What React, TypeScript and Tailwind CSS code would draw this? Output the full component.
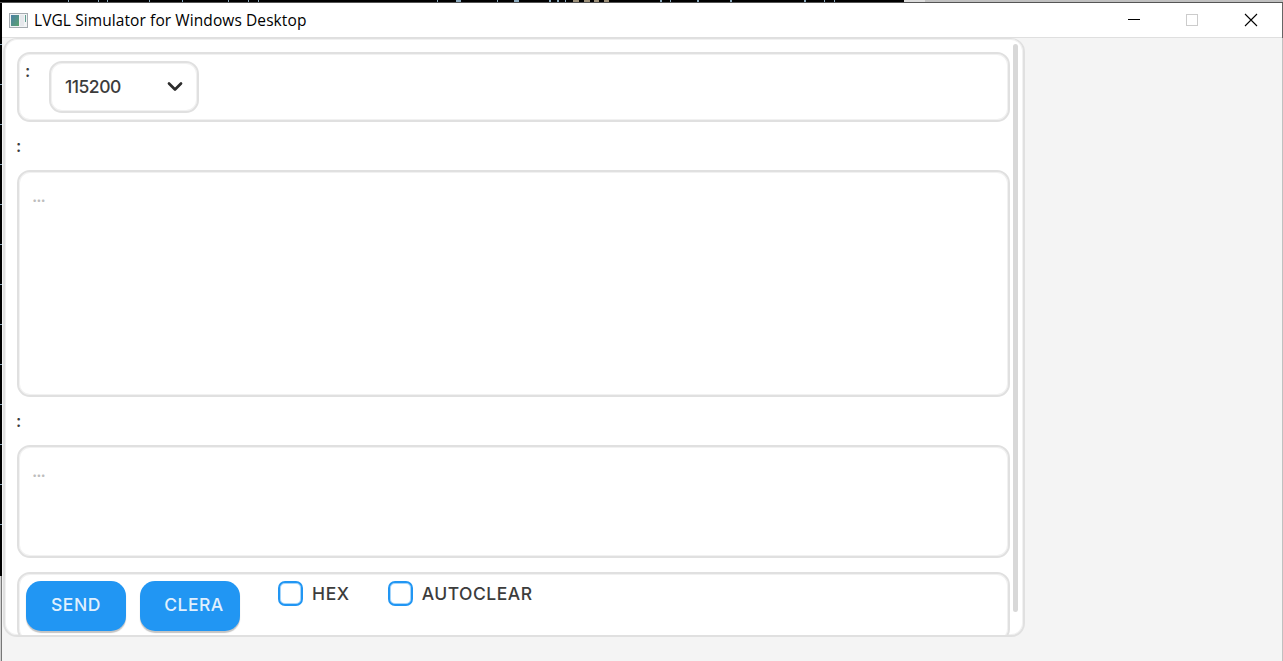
import type { ReactNode } from "react";

type PanelProps = {
  className?: string;
  children?: ReactNode;
};

type ActionButtonProps = {
  label: string;
  className?: string;
};

// rows of the terminal window that show past the left edge
const STREAKS = [44, 84, 124, 164, 204, 244, 284, 324, 364, 404, 444, 484, 524];

const Panel = ({ className = "", children }: PanelProps) => (
  <div
    className={`rounded-[13px] border-2 border-[#e0e0e0] bg-white shadow-[inset_0_0_0_1px_#f1f1f1] ${className}`}
  >
    {children}
  </div>
);

const ActionButton = ({ label, className = "" }: ActionButtonProps) => (
  <button
    type="button"
    className={`h-[50px] w-[100px] rounded-[15px] bg-[#2196f3] pb-[3px] text-[17.5px] leading-[46px] text-[#e0f0fd] shadow-[0_2px_1px_#c4c4c4] ${className}`}
  >
    {label}
  </button>
);

const Checkbox = ({ label, className }: { label: string; className: string }) => (
  <label className="flex h-[25px] items-center gap-[9px]">
    <span className="h-[25px] w-[25px] rounded-[7px] border-2 border-[#2196f3] bg-white shadow-[inset_0_0_0_1px_#a6d5fa]" />
    <span className={`text-[17.5px] leading-[25px] ${className}`}>{label}</span>
  </label>
);

const AppIcon = () => (
  <svg width="19" height="15" viewBox="0 0 19 15">
    <defs>
      <linearGradient id="pane" x1="0" y1="0" x2="1" y2="1">
        <stop offset="0" stopColor="#4a7fa5" />
        <stop offset="1" stopColor="#5ba36f" />
      </linearGradient>
    </defs>
    <rect x=".5" y=".5" width="18" height="14" fill="#f2f4f5" stroke="#a5abb0" />
    <rect x="2" y="2" width="8" height="11" fill="url(#pane)" />
    <rect x="11" y="2" width="4" height="11" fill="#e6e8ec" />
    <rect x="16" y="2" width="1" height="7" fill="#5f9f90" />
  </svg>
);

const TerminalEdge = () => (
  <svg className="shrink-0" width="904" height="2" viewBox="0 0 904 2">
    <rect width="904" height="2" fill="#000" />
    <path
      d="M68 1h1M98 1h1M107 1h1M149 1h1M182 1h1M228 1h1M248 1h1M258 1h1M437 1h1M456 1h5M497 1h1M514 1h5M549 1h2M557 1h2M565 1h1M661 0v2M670 1h1M697 1h2M730 1h2M804 1h2M824 1h1M834 1h1"
      stroke="#8ba9bd"
      strokeWidth="2"
    />
    <path d="M573 1h6M584 1h6M594 1h5M604 1h5" stroke="#9b8f78" strokeWidth="2" />
  </svg>
);

const TitleBar = () => (
  <div className="flex h-[34px] items-center bg-white">
    <div className="ml-[7px] flex flex-1 items-center gap-[6px]">
      <AppIcon />
      <span className="font-['Open_Sans',sans-serif] text-[15.5px] font-normal leading-5 tracking-[0.09px] text-black">
        LVGL Simulator for Windows Desktop
      </span>
    </div>
    <svg width="154" height="34" viewBox="0 0 154 34" fill="none">
      <path d="M0 16.5h12" stroke="#000" />
      <rect x="58.5" y="11.5" width="11" height="11" stroke="#ccc" />
      <path d="M117 11l12 12M129 11l-12 12" stroke="#000" strokeWidth="1.1" />
    </svg>
  </div>
);

const App = () => {
  return (
    <div className="flex h-[661px] w-[1283px] flex-col overflow-hidden bg-[#f3f3f3] font-['Inter',sans-serif] font-[450] text-[#3c3c3c]">
      <div className="flex h-[3px] shrink-0 border-b border-[#555]">
        <TerminalEdge />
        <div className="h-[2px] w-[21px] bg-[#dcdcdc]" />
        <div className="h-[2px] flex-1 bg-[#c0c0c0]" />
      </div>
      <div className="flex flex-1">
        <div className="relative w-[2px] border-r border-[#777] bg-[#d0d0d0]">
          <div className="h-[573px] w-[2px] bg-black" />
          {STREAKS.map((y) => (
            <div key={y} className="absolute left-0 h-px w-[2px] bg-[#8ba9bd]" style={{ top: y - 3 }} />
          ))}
        </div>
        <div className="flex-1 bg-[#f4f4f4]">
          <TitleBar />
          <div className="h-px bg-[#dfdfdf]" />
          <div className="ml-px flex h-[599px] w-[1022px] overflow-hidden rounded-[14px] border-2 border-t border-[#e0e0e0] bg-white shadow-[inset_0_0_0_1px_#f1f1f1]">
            <div className="ml-[12px] w-[993px] shrink-0 pt-[13px]">
              <Panel className="flex h-[70px] pl-[6px] pt-[7px]">
                <span className="w-[24px] text-[17.5px] leading-[20px]">:</span>
                <Panel className="flex h-[52px] w-[150px] items-center justify-between pl-[14px] pr-[13px]">
                  <span className="text-[17.5px] font-medium tracking-[-0.5px]">115200</span>
                  <svg width="18" height="12" viewBox="0 0 18 12" fill="none">
                    <path
                      d="M3 2.5l6 6 6-6"
                      stroke="#2c2c2c"
                      strokeWidth="2.7"
                      strokeLinecap="round"
                      strokeLinejoin="round"
                    />
                  </svg>
                </Panel>
              </Panel>
              <div className="-ml-px h-[48px] pt-[13px] text-[17.5px] leading-[22px]">:</div>
              <Panel className="h-[227px] px-[13px] pt-[13px] text-[17.5px] leading-[22px] tracking-[-1.1px] text-[#bdbdbd]">
                ...
              </Panel>
              <div className="-ml-px h-[48px] pt-[13px] text-[17.5px] leading-[22px]">:</div>
              <Panel className="h-[113px] px-[13px] pt-[13px] text-[17.5px] leading-[22px] tracking-[-1.1px] text-[#bdbdbd]">
                ...
              </Panel>
              <Panel className="mt-[14px] flex h-[70px] pl-[7px] pt-[7px]">
                <ActionButton label="SEND" className="mr-[14px] tracking-[0.6px]" />
                <ActionButton label="CLERA" className="mr-[38px] pl-[8px] tracking-[0.5px]" />
                <div className="flex gap-[38px]">
                  <Checkbox label="HEX" className="tracking-[0.6px]" />
                  <Checkbox label="AUTOCLEAR" className="tracking-[0.5px]" />
                </div>
              </Panel>
            </div>
            <div className="ml-[3px] mt-[5px] h-[568px] w-[5px] shrink-0 rounded-full bg-[#d8d8d8]" />
          </div>
        </div>
        <div className="w-px bg-[#c0c0c0]">
          <div className="h-[35px] bg-[#666]" />
        </div>
      </div>
    </div>
  );
};

export default App;
